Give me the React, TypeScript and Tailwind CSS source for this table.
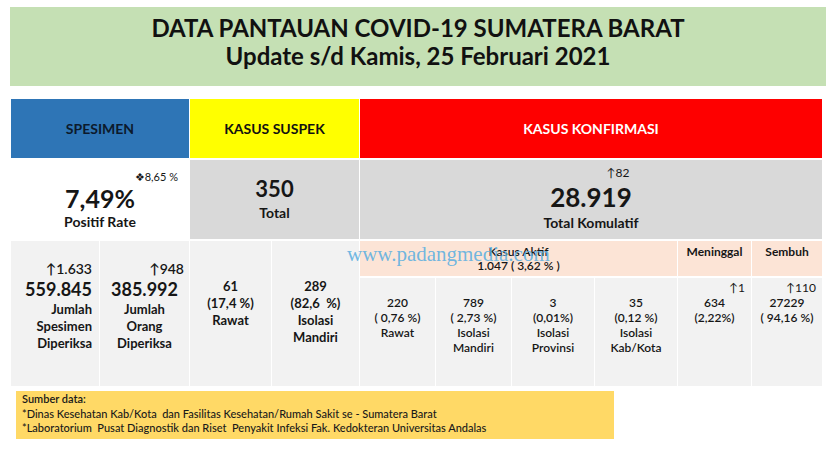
import React from 'react';

// Daily COVID-19 monitoring sheet, laid out like the source spreadsheet
// Column widths follow the Excel grid: 4 columns left, 6 under "Kasus Konfirmasi"

const up = '\u2191';

function Lines({ items, className = '' }: { items: string[]; className?: string }) {
  return (
    <>
      {items.map((t, i) => (
        <div key={i} className={`whitespace-pre ${className}`}>
          {t}
        </div>
      ))}
    </>
  );
}

function DataCell({ arrow, lines }: { arrow?: string; lines: string[] }) {
  return (
    <div className="bg-[#f2f2f2] pt-[2px] flex flex-col text-[12px] leading-[15px] font-semibold text-center">
      <div className="text-right pr-[6px] font-normal whitespace-pre">{arrow ? `${up}${arrow}` : ' '}</div>
      <Lines items={lines} />
    </div>
  );
}

export default function App() {
  return (
    <div className="relative w-[838px] h-[454px] overflow-hidden bg-white text-[#161616] font-['Lato','Open_Sans',sans-serif]">
      {/* Title banner */}
      <div className="ml-[10px] mt-[7px] w-[816px] h-[79px] bg-[#c5e0b4] flex flex-col items-center pt-[7px] text-[24px] leading-[28px] font-bold text-[#111]">
        <div>DATA PANTAUAN COVID-19 SUMATERA BARAT</div>
        <div>Update s/d Kamis, 25 Februari 2021</div>
      </div>

      {/* Main table */}
      <div className="ml-[11px] mt-[13px] grid grid-cols-[88px_89px_81px_87px_75px_75px_82px_82px_73px_70px] grid-rows-[59px_79px_35px_108px] gap-x-px gap-y-[2px]">
        {/* Header row */}
        <div className="col-span-2 bg-[#2e75b6] flex items-center justify-center text-[14px] font-bold text-[#0c1a2c]">
          SPESIMEN
        </div>
        <div className="col-span-2 bg-[#ffff00] flex items-center justify-center text-[14px] font-bold text-[#111]">
          KASUS SUSPEK
        </div>
        <div className="col-span-6 bg-[#fe0000] flex items-center justify-center text-[14px] font-bold text-white">
          KASUS KONFIRMASI
        </div>

        {/* Totals row */}
        <div className="col-span-2 bg-white flex flex-col items-center pt-[10px]">
          <div className="self-end pr-[11px] text-[11px] leading-[14px]">❖8,65 %</div>
          <div className="mt-px text-[25px] leading-[26px] font-bold">7,49%</div>
          <div className="mt-[3px] text-[14px] leading-[16px] font-bold">Positif Rate</div>
        </div>
        <div className="col-span-2 bg-[#d9d9d9] flex flex-col items-center pt-[16px]">
          <div className="text-[22px] leading-[26px] font-bold">350</div>
          <div className="mt-[3px] text-[14px] leading-[16px] font-bold">Total</div>
        </div>
        <div className="col-span-6 bg-[#d9d9d9] flex flex-col items-center pt-[6px]">
          <div className="ml-[54px] text-[12px] leading-[14px]">{up}82</div>
          <div className="mt-[2px] text-[26px] leading-[30px] font-bold">28.919</div>
          <div className="mt-[3px] text-[14px] leading-[16px] font-bold">Total Komulatif</div>
        </div>

        {/* Spesimen details */}
        <div className="row-span-2 bg-[#f2f2f2] flex flex-col items-end pr-[7px] pt-[19px] text-right">
          <div className="text-[14px] leading-[17px] font-semibold">{up}1.633</div>
          <div className="text-[18px] leading-[24px] font-bold">559.845</div>
          <Lines items={['Jumlah', 'Spesimen', 'Diperiksa']} className="text-[13px] leading-[17px] font-bold" />
        </div>
        <div className="row-span-2 bg-[#f2f2f2] flex flex-col items-center pt-[19px] text-center">
          <div className="self-end pr-[5px] text-[14px] leading-[17px] font-semibold">{up}948</div>
          <div className="text-[18px] leading-[24px] font-bold">385.992</div>
          <Lines items={['Jumlah', 'Orang', 'Diperiksa']} className="text-[13px] leading-[17px] font-bold" />
        </div>

        {/* Suspek details */}
        <div className="row-span-2 bg-[#f2f2f2] flex flex-col items-center pt-[37px] text-center text-[13px] leading-[17px] font-bold">
          <Lines items={['61', '(17,4 %)', 'Rawat']} />
        </div>
        <div className="row-span-2 bg-[#f2f2f2] flex flex-col items-center pt-[37px] text-center text-[13px] leading-[17px] font-bold">
          <Lines items={['289', '(82,6  %)', 'Isolasi', 'Mandiri']} />
        </div>

        {/* Konfirmasi sub header */}
        <div className="col-span-4 bg-[#fce4d6] flex flex-col items-center justify-center text-[12px] leading-[14px] font-semibold">
          <div>Kasus Aktif</div>
          <div className="whitespace-pre">1.047 ( 3,62 % )</div>
        </div>
        <div className="bg-[#fce4d6] pt-[4px] text-center text-[12px] leading-[14px] font-bold">Meninggal</div>
        <div className="bg-[#fce4d6] pt-[4px] text-center text-[12px] leading-[14px] font-bold">Sembuh</div>

        {/* Konfirmasi details */}
        <DataCell lines={['220', '( 0,76 %)', 'Rawat']} />
        <DataCell lines={['789', '( 2,73 %)', 'Isolasi', 'Mandiri']} />
        <DataCell lines={['3', '(0,01%)', 'Isolasi', 'Provinsi']} />
        <DataCell lines={['35', '(0,12 %)', 'Isolasi', 'Kab/Kota']} />
        <DataCell arrow="1" lines={['634', '(2,22%)']} />
        <DataCell arrow="110" lines={['27229', '( 94,16 %)']} />
      </div>

      {/* Source note */}
      <div className="ml-[16px] mt-[5px] w-[598px] h-[48px] bg-[#ffd966] pl-[6px] pt-[1px] text-[11px] leading-[14.5px] font-medium text-[#1a1a1a]">
        <div className="font-semibold">Sumber data:</div>
        <div className="whitespace-pre">*Dinas Kesehatan Kab/Kota  dan Fasilitas Kesehatan/Rumah Sakit se - Sumatera Barat</div>
        <div className="whitespace-pre">*Laboratorium  Pusat Diagnostik dan Riset  Penyakit Infeksi Fak. Kedokteran Universitas Andalas</div>
      </div>

      {/* Watermark over the table */}
      <div className="absolute left-[347px] top-[244px] text-[21px] leading-[21px] font-['Liberation_Serif',serif] text-[#5fb0e0]/90 pointer-events-none">
        www.padangmedia.com
      </div>
    </div>
  );
}
